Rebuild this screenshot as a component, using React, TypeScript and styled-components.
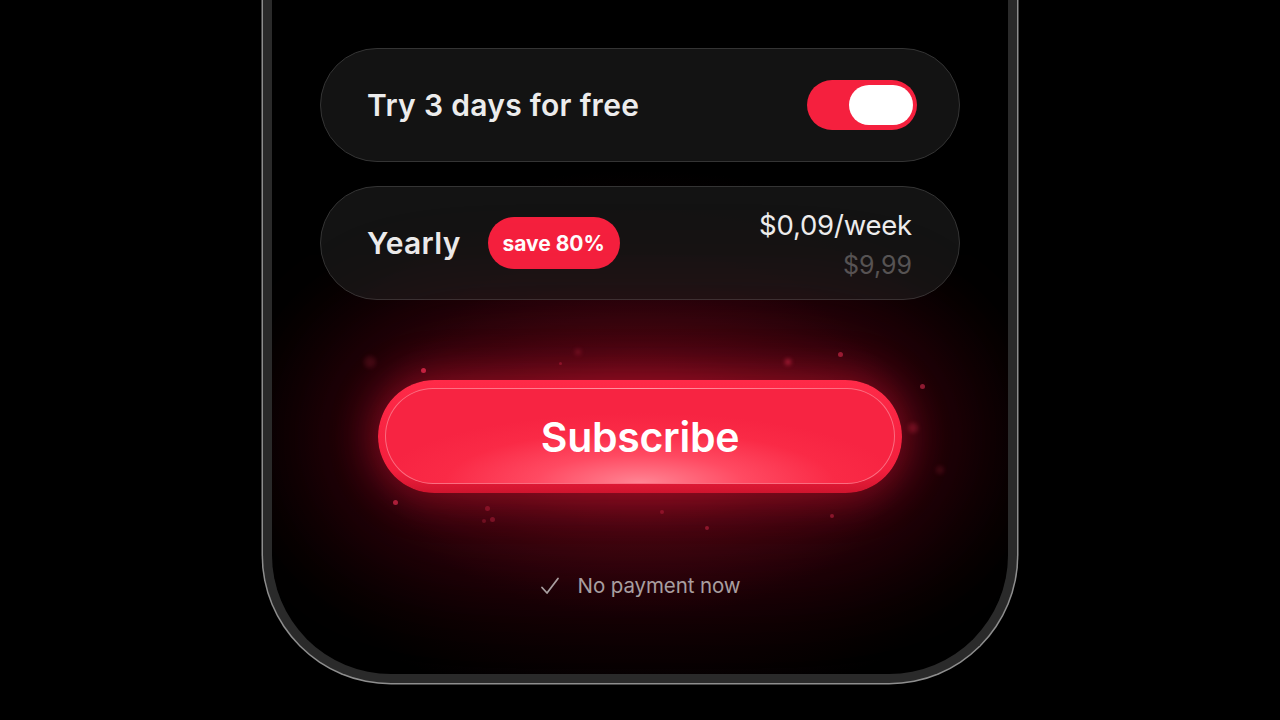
import React from "react";
import styled, { createGlobalStyle } from "styled-components";

const GlobalStyle = createGlobalStyle`
  html, body {
    margin: 0;
    padding: 0;
    background: #000;
    width: 1280px;
    height: 720px;
    overflow: hidden;
    font-family: Inter, "Noto Sans", "Liberation Sans", sans-serif;
  }
`;

const Page = styled.div`
  width: 1280px;
  height: 720px;
  display: flex;
  justify-content: center;
  background: #000;
`;

const Frame = styled.div`
  box-sizing: border-box;
  width: 754px;
  height: 683px;
  border: 9px solid #2a2a2a;
  border-top: none;
  border-radius: 0 0 128px 128px;
  box-shadow: 0 0 0 1.5px #8e8e8e;
  background: radial-gradient(
      ellipse 420px 270px at 50% 440px,
      rgba(140, 12, 34, 0.7) 0%,
      rgba(95, 8, 24, 0.5) 35%,
      rgba(50, 3, 12, 0.35) 65%,
      rgba(0, 0, 0, 0) 100%
    ),
    #000;
  overflow: hidden;
`;

const Screen = styled.div`
  display: flex;
  flex-direction: column;
  align-items: center;
  padding: 48px 48px 0;
`;

const Card = styled.div`
  box-sizing: border-box;
  width: 640px;
  height: 114px;
  display: flex;
  align-items: center;
  padding: 0 42px 0 46px;
  border-radius: 57px;
  border: 1.5px solid #343434;
  background: rgba(22, 22, 22, 0.88);
  & + & {
    margin-top: 24px;
  }
`;

const Title = styled.span<{ grow?: boolean }>`
  color: #ececec;
  font-size: 30px;
  font-weight: 600;
  letter-spacing: 0.3px;
  flex: ${(p) => (p.grow ? 1 : "none")};
`;

const Toggle = styled.div`
  box-sizing: border-box;
  width: 110px;
  height: 50px;
  border-radius: 25px;
  background: #f5203e;
  display: flex;
  justify-content: flex-end;
  align-items: center;
  padding: 0 4px;
`;

const Knob = styled.div`
  width: 64px;
  height: 40px;
  border-radius: 20px;
  background: #fff;
`;

const Badge = styled.span`
  box-sizing: border-box;
  height: 52px;
  width: 132px;
  margin-left: 27px;
  border-radius: 26px;
  background: #f5203e;
  color: #fff;
  font-size: 21px;
  font-weight: 700;
  display: flex;
  align-items: center;
  justify-content: center;
`;

const Prices = styled.div`
  margin-left: auto;
  margin-right: 5px;
  padding-top: 4px;
  display: flex;
  flex-direction: column;
  align-items: flex-end;
  line-height: 1;
`;

const Price = styled.span`
  color: #ededed;
  font-size: 27.5px;
  font-weight: 400;
  letter-spacing: -0.2px;
`;

const OldPrice = styled.span`
  color: #555;
  font-size: 25px;
  margin-top: 13px;
`;

const ButtonArea = styled.div`
  position: relative;
  width: 640px;
  display: flex;
  flex-direction: column;
  align-items: center;
  padding-top: 80px;
`;

const Dot = styled.span<{ size: number; glow: number }>`
  position: absolute;
  width: ${(p) => p.size}px;
  height: ${(p) => p.size}px;
  border-radius: 50%;
  background: rgba(255, 60, 100, ${(p) => p.glow});
  filter: blur(${(p) => (p.size > 5 ? 2 : 0.4)}px);
`;

const SubscribeButton = styled.button`
  position: relative;
  width: 524px;
  height: 113px;
  border: none;
  border-radius: 57px;
  background: linear-gradient(180deg, #ff2a48 0%, #f21f3d 80%, #cf142e 100%);
  box-shadow: 0 0 40px 6px rgba(255, 25, 60, 0.38),
    0 0 130px 40px rgba(190, 10, 40, 0.28);
  color: #fff;
  font-family: Inter, "Noto Sans", "Liberation Sans", sans-serif;
  font-size: 41px;
  font-weight: 600;
  letter-spacing: -0.3px;
  cursor: pointer;
  &::before {
    content: "";
    position: absolute;
    top: 8px;
    left: 7px;
    right: 7px;
    bottom: 9px;
    border-radius: 50px;
    border: 1.5px solid rgba(255, 170, 180, 0.55);
    background: radial-gradient(
      ellipse 260px 70px at 50% 100%,
      #ff8594 0%,
      #ff4a62 40%,
      #fa2a46 75%,
      #f72442 100%
    );
  }
  span {
    position: relative;
  }
`;

const Note = styled.div`
  margin-top: 80px;
  display: flex;
  align-items: center;
  gap: 18px;
  color: #a8a8a8;
  font-size: 20.5px;
  letter-spacing: -0.1px;
`;

const dots = [
  { x: 423, y: 370, s: 5, g: 0.7 },
  { x: 370, y: 362, s: 12, g: 0.15 },
  { x: 578, y: 352, s: 6, g: 0.25 },
  { x: 560, y: 363, s: 3, g: 0.3 },
  { x: 788, y: 362, s: 6, g: 0.55 },
  { x: 840, y: 354, s: 5, g: 0.5 },
  { x: 922, y: 386, s: 5, g: 0.5 },
  { x: 913, y: 428, s: 10, g: 0.25 },
  { x: 395, y: 502, s: 5, g: 0.6 },
  { x: 487, y: 508, s: 5, g: 0.3 },
  { x: 492, y: 519, s: 5, g: 0.3 },
  { x: 484, y: 521, s: 4, g: 0.25 },
  { x: 662, y: 512, s: 4, g: 0.3 },
  { x: 707, y: 528, s: 4, g: 0.4 },
  { x: 832, y: 516, s: 4, g: 0.4 },
  { x: 940, y: 470, s: 8, g: 0.15 },
];

const CheckIcon = () => (
  <svg width="20" height="18" viewBox="0 0 20 18" fill="none">
    <path
      d="M2 10.5 L7 16 L18 1.5"
      stroke="#a8a8a8"
      strokeWidth="1.8"
      strokeLinecap="round"
      strokeLinejoin="round"
    />
  </svg>
);

const App = () => {
  return (
    <Page>
      <GlobalStyle />
      <Frame>
        <Screen>
          <Card>
            <Title grow>Try 3 days for free</Title>
            <Toggle>
              <Knob />
            </Toggle>
          </Card>
          <Card>
            <Title>Yearly</Title>
            <Badge>save 80%</Badge>
            <Prices>
              <Price>$0,09/week</Price>
              <OldPrice>$9,99</OldPrice>
            </Prices>
          </Card>
          <ButtonArea>
            {dots.map((d, i) => (
              <Dot
                key={i}
                size={d.s}
                glow={d.g}
                style={{ left: d.x - 320 - d.s / 2, top: d.y - 300 - d.s / 2 }}
              />
            ))}
            <SubscribeButton>
              <span>Subscribe</span>
            </SubscribeButton>
            <Note>
              <CheckIcon />
              <span>No payment now</span>
            </Note>
          </ButtonArea>
        </Screen>
      </Frame>
    </Page>
  );
};

export default App;
